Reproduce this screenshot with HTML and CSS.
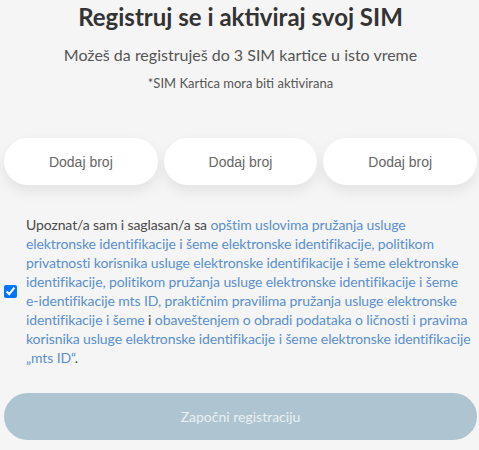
FILE: index.html
```html
<!DOCTYPE html>
<html lang="sr">
<head>
<meta charset="utf-8">
<link rel="stylesheet" href="styles.css">
</head>
<body>
<main class="page">
  <h1 class="title">Registruj se i aktiviraj svoj SIM</h1>
  <p class="subtitle">Možeš da registruješ do 3 SIM kartice u isto vreme</p>
  <p class="note">*SIM Kartica mora biti aktivirana</p>
  <div class="numbers">
    <button class="add">Dodaj broj</button>
    <button class="add">Dodaj broj</button>
    <button class="add">Dodaj broj</button>
  </div>
  <label class="consent">
    <input type="checkbox" class="check" checked>
    <span class="consent-text">Upoznat/a sam i saglasan/a sa <a href="#">opštim uslovima pružanja usluge elektronske identifikacije i šeme elektronske identifikacije, politikom privatnosti korisnika usluge elektronske identifikacije i šeme elektronske identifikacije, politikom pružanja usluge elektronske identifikacije i šeme <span class="nowrap">e-identifikacije</span> mts ID, praktičnim pravilima pružanja usluge elektronske identifikacije i šeme</a> i <a href="#">obaveštenjem o obradi podataka o ličnosti i pravima korisnika usluge elektronske identifikacije i šeme elektronske identifikacije „mts ID“</a>.</span>
  </label>
  <button class="start" disabled>Započni registraciju</button>
</main>
</body>
</html>
```
FILE: styles.css
```css
html, body {
  margin: 0;
  padding: 0;
  background: #f5f5f5;
}
body {
  font-family: Lato, "Open Sans", sans-serif;
  color: #444;
}
.page {
  padding: 0 2px 0 4px;
  display: flex;
  flex-direction: column;
}
.title {
  margin: 0;
  font-size: 24px;
  line-height: 33px;
  font-weight: 700;
  color: #333;
  text-align: center;
}
.subtitle {
  margin: 11px 0 0;
  font-size: 16px;
  line-height: 22px;
  color: #555;
  text-align: center;
}
.note {
  margin: 8px 0 0;
  font-size: 13px;
  line-height: 18px;
  color: #555;
  text-align: center;
}
.numbers {
  margin-top: 46px;
  display: flex;
  gap: 6px;
}
.add {
  flex: 1;
  height: 47px;
  border: none;
  border-radius: 24px;
  background: #fff;
  box-shadow: 0 6px 14px rgba(0, 0, 0, 0.08);
  font-family: "Liberation Sans", Arial, sans-serif;
  font-size: 14px;
  color: #666;
}
.consent {
  margin-top: 30px;
  display: flex;
  align-items: center;
  gap: 9px;
}
.check {
  margin: 0;
  width: 13px;
  height: 13px;
  flex: none;
}
.consent-text {
  font-size: 14px;
  line-height: 19px;
  letter-spacing: -0.1px;
  color: #4a4a4a;
}
.consent-text a {
  color: #5a8fd0;
  text-decoration: none;
}
.nowrap {
  white-space: nowrap;
}
.start {
  margin-top: 26px;
  height: 47px;
  border: none;
  border-radius: 24px;
  background: #aec5d1;
  color: #eaf0f4;
  font-family: Lato, sans-serif;
  font-size: 14px;
}
```
